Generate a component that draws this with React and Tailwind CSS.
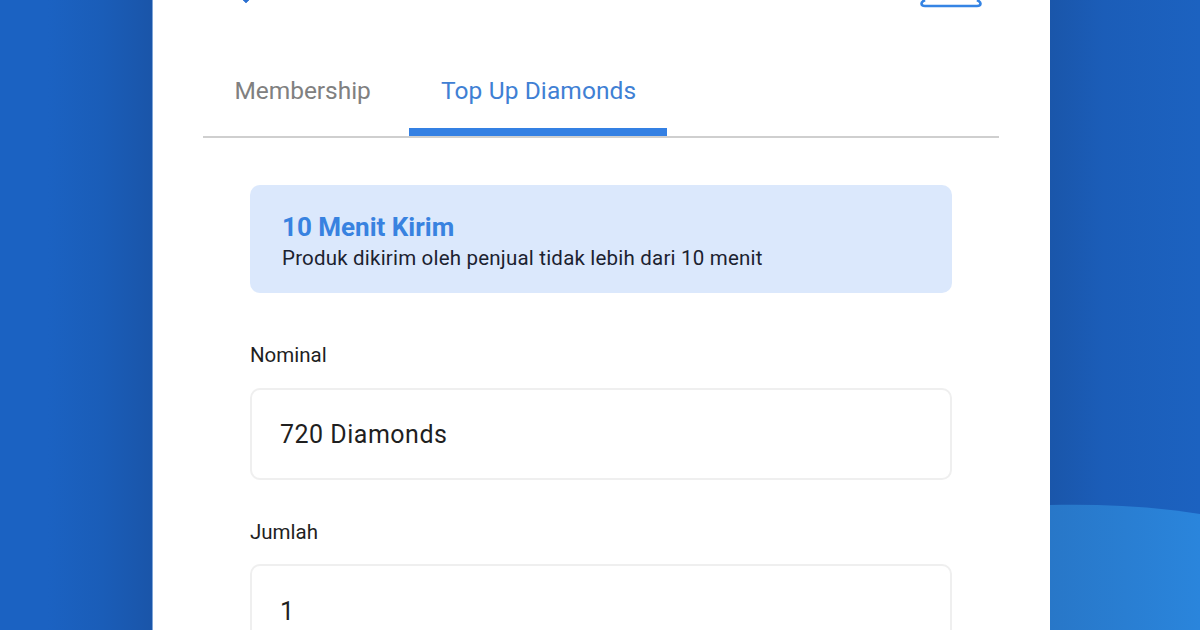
import React from "react";

export default function App() {
  return (
    <div className="relative h-[630px] w-[1200px] overflow-hidden bg-[#1b5fbd] font-['Roboto',sans-serif]">
      {/* page backdrop */}
      <div className="absolute inset-0 bg-[linear-gradient(90deg,#1b62c2_0%,#1b62c2_4%,#1a5db8_8.5%,#1a55a9_12.7%,#1a56aa_87.5%,#1b5db8_92%,#1c62c0_100%)]" />
      <svg className="absolute bottom-0 right-0 h-[126px] w-[150px]" viewBox="0 0 150 126" preserveAspectRatio="none">
        <defs>
          <linearGradient id="w" x1="0" x2="1" y1="0" y2="0">
            <stop offset="0" stopColor="#2877c8" />
            <stop offset="1" stopColor="#2a85dc" />
          </linearGradient>
        </defs>
        <path d="M0 1 C50 0 100 2 150 10 L150 126 L0 126 Z" fill="url(#w)" />
      </svg>

      {/* white card */}
      <div className="absolute left-[152px] top-0 h-[630px] w-[898px] border-l border-[#7fa6d8] bg-white">
        {/* clipped header */}
        <div className="-ml-px flex h-[8px] items-start justify-between overflow-hidden pl-[89px] pr-[68px]">
          <svg width="12" height="5" viewBox="0 0 12 5">
            <path d="M2 0 L8 0 L5 3 Z" fill="#2a6fd0" stroke="#2a6fd0" strokeWidth="0.6" />
          </svg>
          <svg width="62" height="8" viewBox="0 0 62 8">
            <path d="M5 0 C3 1 1.5 2 1.5 3.5 C1.5 5 3 6 5 6 L57 6 C59 6 60.5 5 60.5 3.5 C60.5 2 59 1 57 0" fill="none" stroke="#3584e4" strokeWidth="2.6" />
          </svg>
        </div>

        {/* tabs */}
        <div className="ml-[50px] mr-[51px] mt-[64px] flex h-[66px] items-start border-b-2 border-[#cfcfcf]">
          <div className="h-[64px] w-[206px] pl-[31.5px] pt-[1px] text-[24.5px] leading-[36px] tracking-[-0.05px] text-[#808080]">
            Membership
          </div>
          <div className="h-[64px] w-[258px] border-b-[8px] border-[#3480e3] pl-[32px] pt-[1px] text-[24.5px] leading-[36px] tracking-[0.1px] text-[#3f80d4]">
            Top Up Diamonds
          </div>
        </div>

        {/* form */}
        <div className="ml-[97px] mr-[98px] mt-[47px] flex flex-col">
          <div className="flex h-[108px] flex-col rounded-[10px] bg-[#dbe8fc] pl-[32px] pt-[26px]">
            <div className="text-[26px] font-bold leading-[32px] text-[#3882e0]">10 Menit Kirim</div>
            <div className="text-[20.5px] leading-[30px] tracking-[0.2px] text-[#1b2230]">
              Produk dikirim oleh penjual tidak lebih dari 10 menit
            </div>
          </div>

          <div className="mt-[49px] text-[20.5px] leading-[26px] text-[#1f1f1f]">Nominal</div>
          <div className="mt-[20px] flex h-[92px] items-center rounded-[10px] border-2 border-[#efefef] pl-[28px] pt-[2px] text-[25px] tracking-[0.5px] text-[#1f1f1f]">
            720 Diamonds
          </div>

          <div className="mt-[39px] text-[20.5px] leading-[26px] text-[#1f1f1f]">Jumlah</div>
          <div className="mt-[19px] flex h-[92px] items-center rounded-[10px] border-2 border-[#efefef] pl-[28px] pt-[4px] text-[25px] text-[#1f1f1f]">
            1
          </div>
        </div>
      </div>
    </div>
  );
}
